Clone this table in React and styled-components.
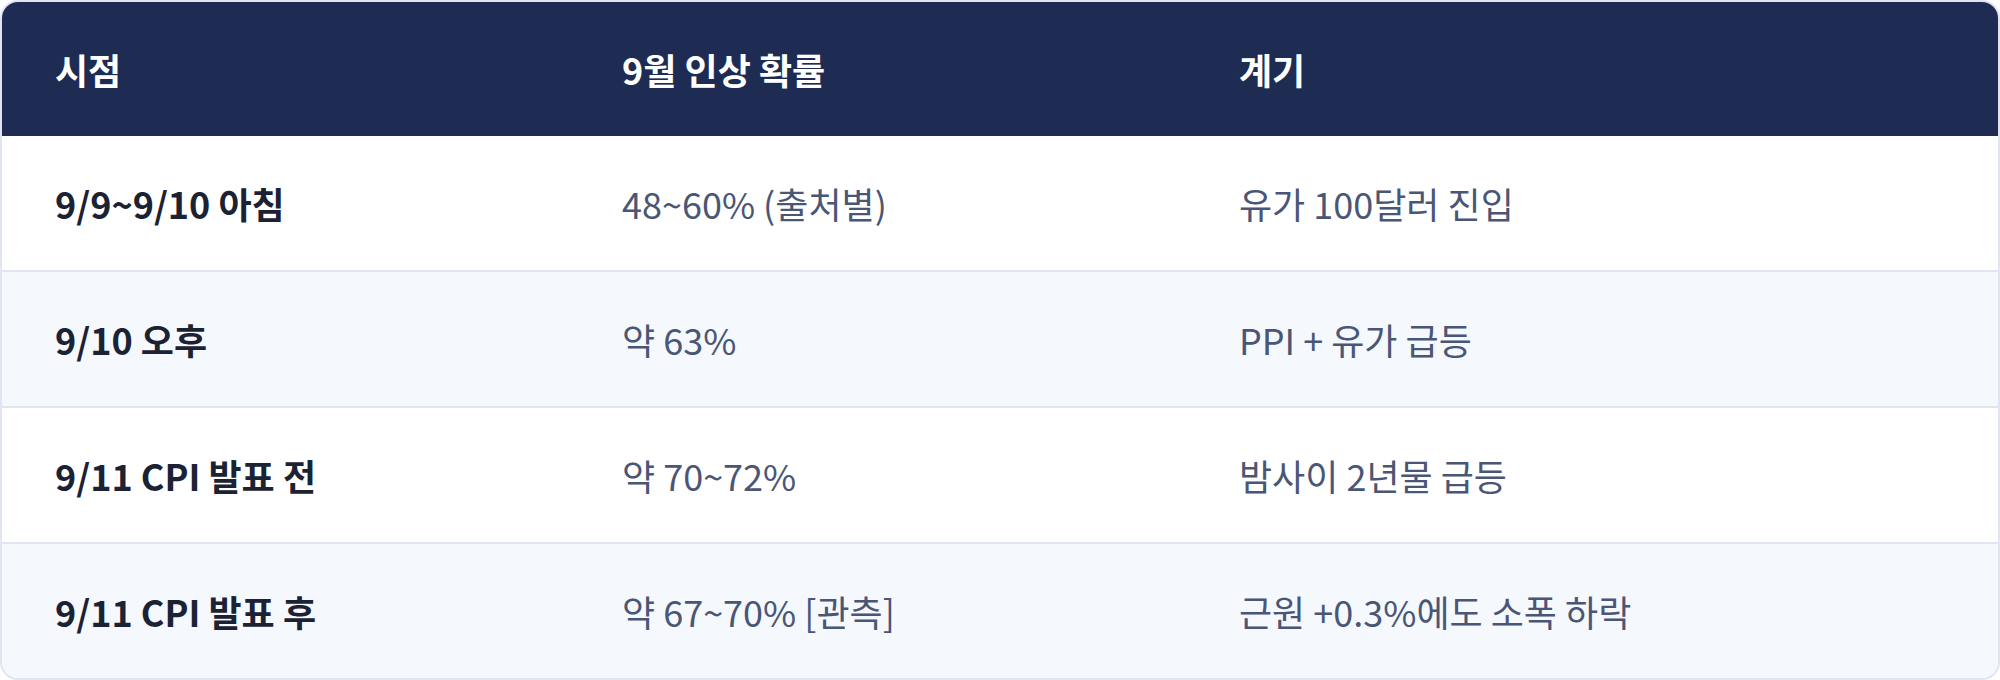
import React from 'react'
import styled, { createGlobalStyle } from 'styled-components'

const rows = [
    { time: '9/9~9/10 아침', prob: '48~60% (출처별)', cause: '유가 100달러 진입' },
    { time: '9/10 오후', prob: '약 63%', cause: 'PPI + 유가 급등' },
    { time: '9/11 CPI 발표 전', prob: '약 70~72%', cause: '밤사이 2년물 급등' },
    { time: '9/11 CPI 발표 후', prob: '약 67~70% [관측]', cause: '근원 +0.3%에도 소폭 하락' },
]

function App() {
    return (
        <>
            <GlobalStyle />
            <Table>
                <HeadRow>
                    <HeadCell>시점</HeadCell>
                    <HeadCell>9월 인상 확률</HeadCell>
                    <HeadCell>계기</HeadCell>
                </HeadRow>
                {rows.map((r, i) => (
                    <Row key={r.time} striped={i % 2 === 1} last={i === rows.length - 1}>
                        <Cell strong>{r.time}</Cell>
                        <Cell>{r.prob}</Cell>
                        <Cell>{r.cause}</Cell>
                    </Row>
                ))}
            </Table>
        </>
    )
}

export default App

const GlobalStyle = createGlobalStyle`
    html, body {
        margin: 0;
        padding: 0;
        background: #ffffff;
    }
    * {
        box-sizing: border-box;
    }
`

const Table = styled.div`
    width: 2000px;
    height: 680px;
    border: 2px solid #dfe5f1;
    border-radius: 18px;
    overflow: hidden;
    font-family: "Noto Sans CJK KR", "Noto Sans", sans-serif;
    background: #ffffff;
`

const HeadRow = styled.div`
    display: grid;
    grid-template-columns: 567px 617px 1fr;
    height: 134px;
    align-items: center;
    background: #1e2c54;
`

const HeadCell = styled.div`
    padding-left: 53px;
    color: #ffffff;
    font-size: 36px;
    font-weight: 700;
`

const Row = styled.div.withConfig({ shouldForwardProp: (p) => !['striped', 'last'].includes(p) })`
    display: grid;
    grid-template-columns: 567px 617px 1fr;
    height: ${(p) => (p.last ? '134px' : '136px')};
    align-items: center;
    background: ${(p) => (p.striped ? '#f5f8fd' : '#ffffff')};
    border-bottom: ${(p) => (p.last ? 'none' : '2px solid #dfe5f1')};
`

const Cell = styled.div.withConfig({ shouldForwardProp: (p) => p !== 'strong' })`
    padding-left: 53px;
    font-size: 36px;
    font-weight: ${(p) => (p.strong ? 700 : 400)};
    color: ${(p) => (p.strong ? '#1b2234' : '#4a5675')};
`
